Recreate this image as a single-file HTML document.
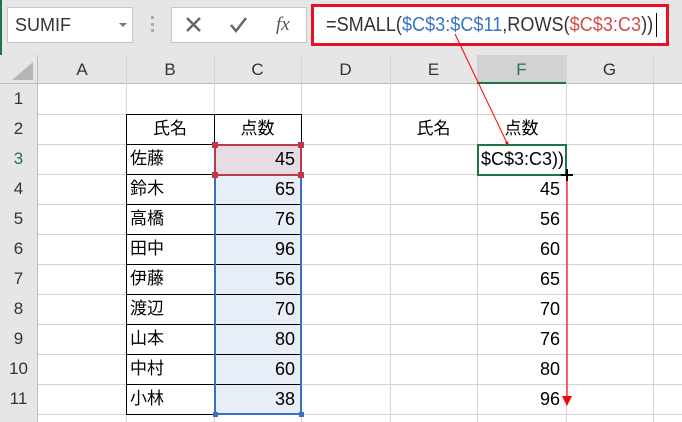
<!DOCTYPE html>
<html><head><meta charset="utf-8"><style>
*{margin:0;padding:0;box-sizing:border-box}
body{width:682px;height:422px;overflow:hidden;background:#fff;position:relative;font-family:"Liberation Sans","Noto Sans CJK JP",sans-serif}
.a{position:absolute}
.top{left:0;top:0;width:682px;height:55px;background:#e6e6e6}
.hdr{background:#e6e6e6;color:#333;font-size:17px;text-align:center}
.c{position:absolute;font-size:16px;color:#000;height:30px;line-height:30px}
.r{text-align:right;padding-right:6px}
</style></head><body>
<div class="a top"></div>
<div class="a" style="left:0;top:0;width:2px;height:422px;background:#217346"></div>
<div class="a" style="left:7px;top:7px;width:126px;height:36px;background:#fff;border:1px solid #c6c6c6;font-size:18px;line-height:34px;padding-left:7px;color:#333">SUMIF</div>
<div class="a" style="left:119px;top:23px;width:0;height:0;border-left:4px solid transparent;border-right:4px solid transparent;border-top:4px solid #777"></div>
<div class="a" style="left:151px;top:16px;width:3px;height:16px;border-left:3px dotted #aaa"></div>
<div class="a" style="left:171px;top:7px;width:136px;height:36px;background:#fff;border:1px solid #c6c6c6"></div>
<svg class="a" style="left:171px;top:7px" width="136" height="36">
<g stroke="#666" stroke-width="2.5" fill="none"><line x1="16" y1="11" x2="29" y2="24"/><line x1="29" y1="11" x2="16" y2="24"/>
<polyline points="60,18 65,24 75,11"/></g></svg>
<div class="a" style="left:276px;top:8px;font-size:19px;color:#555;line-height:34px;font-family:'Liberation Serif',serif;font-style:italic">fx</div>
<div class="a" style="left:311px;top:4px;width:358px;height:42px;background:#fff;border:3px solid #e81123"></div>
<div class="a" style="left:326px;top:12px;font-size:20px;line-height:26px;white-space:nowrap;transform:scaleX(.905);transform-origin:left;color:#333">=SMALL(<span style="color:#3a74c9">$C$3:$C$11</span>,ROWS(<span style="color:#d24e4e">$C$3:C3</span>))</div>
<div class="a" style="left:656px;top:13px;width:1px;height:24px;background:#000"></div>

<div class="a hdr" style="left:0;top:55px;width:682px;height:29px;border-bottom:1px solid #bcbcbc"></div>
<div class="a" style="left:12px;top:62px;width:0;height:0;border-left:21px solid transparent;border-bottom:18px solid #b5b5b5"></div>
<svg class="a" style="left:0;top:0" width="682" height="422">
<g stroke="#d4d4d4" stroke-width="1">
<line x1="126.5" y1="55" x2="126.5" y2="422"/><line x1="214.5" y1="55" x2="214.5" y2="422"/><line x1="301.5" y1="55" x2="301.5" y2="422"/><line x1="390.5" y1="55" x2="390.5" y2="422"/><line x1="477.5" y1="55" x2="477.5" y2="422"/><line x1="566.5" y1="55" x2="566.5" y2="422"/><line x1="653.5" y1="55" x2="653.5" y2="422"/>
<line x1="0" y1="114.5" x2="682" y2="114.5"/><line x1="0" y1="144.5" x2="682" y2="144.5"/><line x1="0" y1="174.5" x2="682" y2="174.5"/><line x1="0" y1="204.5" x2="682" y2="204.5"/><line x1="0" y1="234.5" x2="682" y2="234.5"/><line x1="0" y1="264.5" x2="682" y2="264.5"/><line x1="0" y1="294.5" x2="682" y2="294.5"/><line x1="0" y1="324.5" x2="682" y2="324.5"/><line x1="0" y1="354.5" x2="682" y2="354.5"/><line x1="0" y1="384.5" x2="682" y2="384.5"/><line x1="0" y1="414.5" x2="682" y2="414.5"/>
</g>
<rect x="0" y="84" width="37" height="338" fill="#e6e6e6"/>
<line x1="37.5" y1="55" x2="37.5" y2="422" stroke="#bcbcbc"/>
<rect x="477" y="55" width="89" height="29" fill="#d2d2d2"/>
<rect x="477" y="82" width="89" height="2" fill="#217346"/>
<rect x="215" y="145" width="86" height="29" fill="#e6dce4"/>
<rect x="215" y="175" width="86" height="239" fill="#e8eef8"/>
<g stroke="#000" stroke-width="1" fill="none">
<rect x="126.5" y="114.5" width="175" height="300"/>
<line x1="214.5" y1="114.5" x2="214.5" y2="414.5"/>
<line x1="126.5" y1="144.5" x2="301.5" y2="144.5"/><line x1="126.5" y1="174.5" x2="214.5" y2="174.5"/><line x1="126.5" y1="204.5" x2="301.5" y2="204.5"/><line x1="126.5" y1="234.5" x2="301.5" y2="234.5"/><line x1="126.5" y1="264.5" x2="301.5" y2="264.5"/><line x1="126.5" y1="294.5" x2="301.5" y2="294.5"/><line x1="126.5" y1="324.5" x2="301.5" y2="324.5"/><line x1="126.5" y1="354.5" x2="301.5" y2="354.5"/><line x1="126.5" y1="384.5" x2="301.5" y2="384.5"/>
</g>
<g stroke="#3a6fc4" stroke-width="2"><line x1="215" y1="176" x2="215" y2="414"/><line x1="301" y1="176" x2="301" y2="414"/><line x1="215" y1="414" x2="301" y2="414"/></g>
<rect x="213" y="412" width="5" height="5" fill="#3a6fc4"/><rect x="299" y="412" width="5" height="5" fill="#3a6fc4"/>
<rect x="215" y="145" width="86" height="30" fill="none" stroke="#c0394a" stroke-width="2"/>
<g fill="#c0394a"><rect x="212" y="142" width="6" height="6"/><rect x="298" y="142" width="6" height="6"/><rect x="212" y="172" width="6" height="6"/><rect x="298" y="172" width="6" height="6"/></g>
<rect x="478" y="145" width="88" height="30" fill="#fff" stroke="#217346" stroke-width="2"/>
<line x1="455" y1="34" x2="507" y2="143" stroke="#ff0000" stroke-width="1"/>
<circle cx="507" cy="143" r="1.5" fill="#ff0000"/>
<line x1="567" y1="178" x2="567" y2="398" stroke="#ff3030" stroke-width="1.5"/>
<polygon points="562,396 572,396 567,406" fill="#ff0000"/>
<g stroke="#000" stroke-width="2"><line x1="561" y1="175" x2="573" y2="175"/><line x1="567" y1="169" x2="567" y2="181"/></g>
</svg>
<div class="a hdr" style="left:38px;top:55px;width:88px;line-height:29px;background:none">A</div>
<div class="a hdr" style="left:126px;top:55px;width:88px;line-height:29px;background:none">B</div>
<div class="a hdr" style="left:214px;top:55px;width:87px;line-height:29px;background:none">C</div>
<div class="a hdr" style="left:301px;top:55px;width:89px;line-height:29px;background:none">D</div>
<div class="a hdr" style="left:390px;top:55px;width:87px;line-height:29px;background:none">E</div>
<div class="a hdr" style="left:477px;top:55px;width:89px;line-height:29px;background:none;color:#217346">F</div>
<div class="a hdr" style="left:566px;top:55px;width:87px;line-height:29px;background:none">G</div>
<div class="a" style="left:0;top:84px;width:37px;font-size:17px;color:#333;line-height:30px;text-align:center">1<br>2<br><span style="color:#217346">3</span><br>4<br>5<br>6<br>7<br>8<br>9<br>10<br>11</div>
<div class="c" style="left:126px;top:114px;width:88px;text-align:center;font-size:17px">氏名</div>
<div class="c" style="left:214px;top:114px;width:87px;text-align:center;font-size:17px">点数</div>
<div class="c" style="left:390px;top:114px;width:87px;text-align:center;font-size:17px">氏名</div>
<div class="c" style="left:477px;top:114px;width:89px;text-align:center;font-size:17px">点数</div>
<div class="a" style="left:130px;top:144px;font-size:17px;line-height:30px">佐藤<br>鈴木<br>高橋<br>田中<br>伊藤<br>渡辺<br>山本<br>中村<br>小林</div>
<div class="a r" style="left:214px;top:144px;width:87px;font-size:18px;line-height:30px">45<br>65<br>76<br>96<br>56<br>70<br>80<br>60<br>38</div>
<div class="a" style="left:480px;top:144px;width:84px;font-size:18px;line-height:30px;text-align:right;white-space:nowrap">$C$3:C3))</div>
<div class="a r" style="left:477px;top:174px;width:89px;font-size:18px;line-height:30px">45<br>56<br>60<br>65<br>70<br>76<br>80<br>96</div>
</body></html>
